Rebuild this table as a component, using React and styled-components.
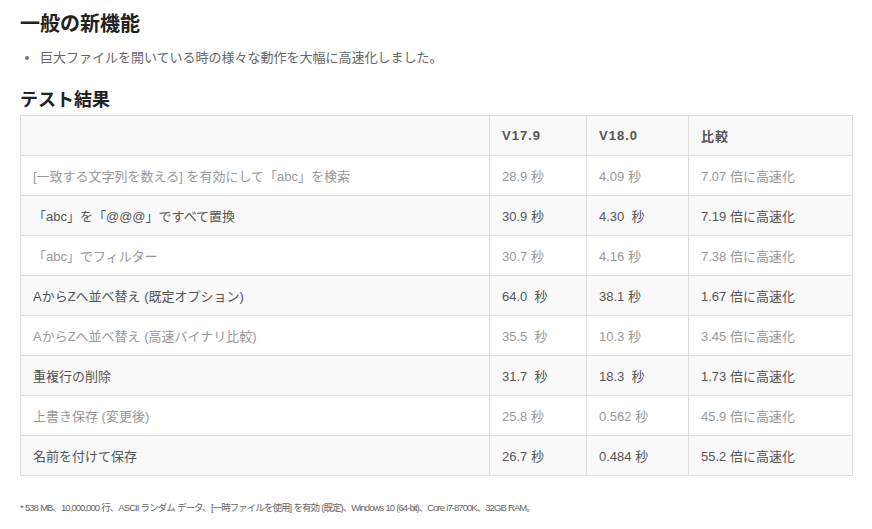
import React from "react";
import styled, { createGlobalStyle } from "styled-components";

const Global = createGlobalStyle`
  html, body { margin: 0; padding: 0; background: #fff; }
  body { font-family: "Liberation Sans", Arial, "Noto Sans CJK JP", sans-serif; color: #333; }
`;

const Page = styled.div`
  padding: 10px 20px 0 20px;
  width: 832px;
`;

const Title = styled.h2`
  margin: 0;
  font-size: 20px;
  line-height: 28px;
  font-weight: bold;
  color: #222;
`;

const List = styled.ul`
  margin: 10px 0 0 0;
  padding: 0 0 0 20px;
  list-style: none;
`;

const Item = styled.li`
  position: relative;
  font-size: 13px;
  line-height: 20px;
  color: #666;
  &::before {
    content: "";
    position: absolute;
    left: -15px;
    top: 8px;
    width: 4px;
    height: 4px;
    border-radius: 50%;
    background: #777;
  }
`;

const Heading = styled.h3`
  margin: 20px 0 0 0;
  font-size: 18px;
  line-height: 24px;
  font-weight: bold;
  color: #222;
`;

const Table = styled.table`
  margin-top: 3px;
  width: 832px;
  border-collapse: collapse;
  table-layout: fixed;
  font-size: 13px;
`;

const Row = styled.tr`
  background: ${(p) => (p.$shade ? "#f9f9f9" : "#fff")};
  color: ${(p) => (p.$shade ? "#555" : "#999")};
`;

const HeadCell = styled.th`
  height: 39px;
  padding: 0 12px;
  border: 1px solid #ddd;
  text-align: left;
  font-weight: bold;
  color: #555;
  letter-spacing: 1px;
`;

const Cell = styled.td`
  height: 39px;
  padding: 0 12px;
  border: 1px solid #ddd;
  white-space: pre;
`;

const Note = styled.p`
  margin: 25px 0 0 0;
  font-size: 9.5px;
  line-height: 14px;
  color: #666;
  letter-spacing: -0.95px;
  word-spacing: 0.5px;
`;

const rows = [
  ["[一致する文字列を数える] を有効にして「abc」を検索", "28.9 秒", "4.09 秒", "7.07 倍に高速化"],
  ["「abc」を「@@@」ですべて置換", "30.9 秒", "4.30\u00a0\u00a0秒", "7.19 倍に高速化"],
  ["「abc」でフィルター", "30.7 秒", "4.16 秒", "7.38 倍に高速化"],
  ["AからZへ並べ替え (既定オプション)", "64.0\u00a0\u00a0秒", "38.1 秒", "1.67 倍に高速化"],
  ["AからZへ並べ替え (高速バイナリ比較)", "35.5\u00a0\u00a0秒", "10.3 秒", "3.45 倍に高速化"],
  ["重複行の削除", "31.7\u00a0\u00a0秒", "18.3\u00a0\u00a0秒", "1.73 倍に高速化"],
  ["上書き保存 (変更後)", "25.8 秒", "0.562 秒", "45.9 倍に高速化"],
  ["名前を付けて保存", "26.7 秒", "0.484 秒", "55.2 倍に高速化"],
];

export default function App() {
  return (
    <>
      <Global />
      <Page>
        <Title>一般の新機能</Title>
        <List>
          <Item>巨大ファイルを開いている時の様々な動作を大幅に高速化しました。</Item>
        </List>
        <Heading>テスト結果</Heading>
        <Table>
          <colgroup>
            <col style={{ width: "469px" }} />
            <col style={{ width: "97px" }} />
            <col style={{ width: "102px" }} />
            <col style={{ width: "164px" }} />
          </colgroup>
          <thead>
            <Row $shade>
              <HeadCell></HeadCell>
              <HeadCell>V17.9</HeadCell>
              <HeadCell>V18.0</HeadCell>
              <HeadCell>比較</HeadCell>
            </Row>
          </thead>
          <tbody>
            {rows.map((r, i) => (
              <Row key={i} $shade={i % 2 === 1}>
                {r.map((c, j) => (
                  <Cell key={j}>{c}</Cell>
                ))}
              </Row>
            ))}
          </tbody>
        </Table>
        <Note>
          * 538 MB、10,000,000 行、ASCII ランダム データ、[一時ファイルを使用] を有効 (既定)、Windows 10 (64-bit)、Core i7-8700K、32GB RAM。
        </Note>
      </Page>
    </>
  );
}
